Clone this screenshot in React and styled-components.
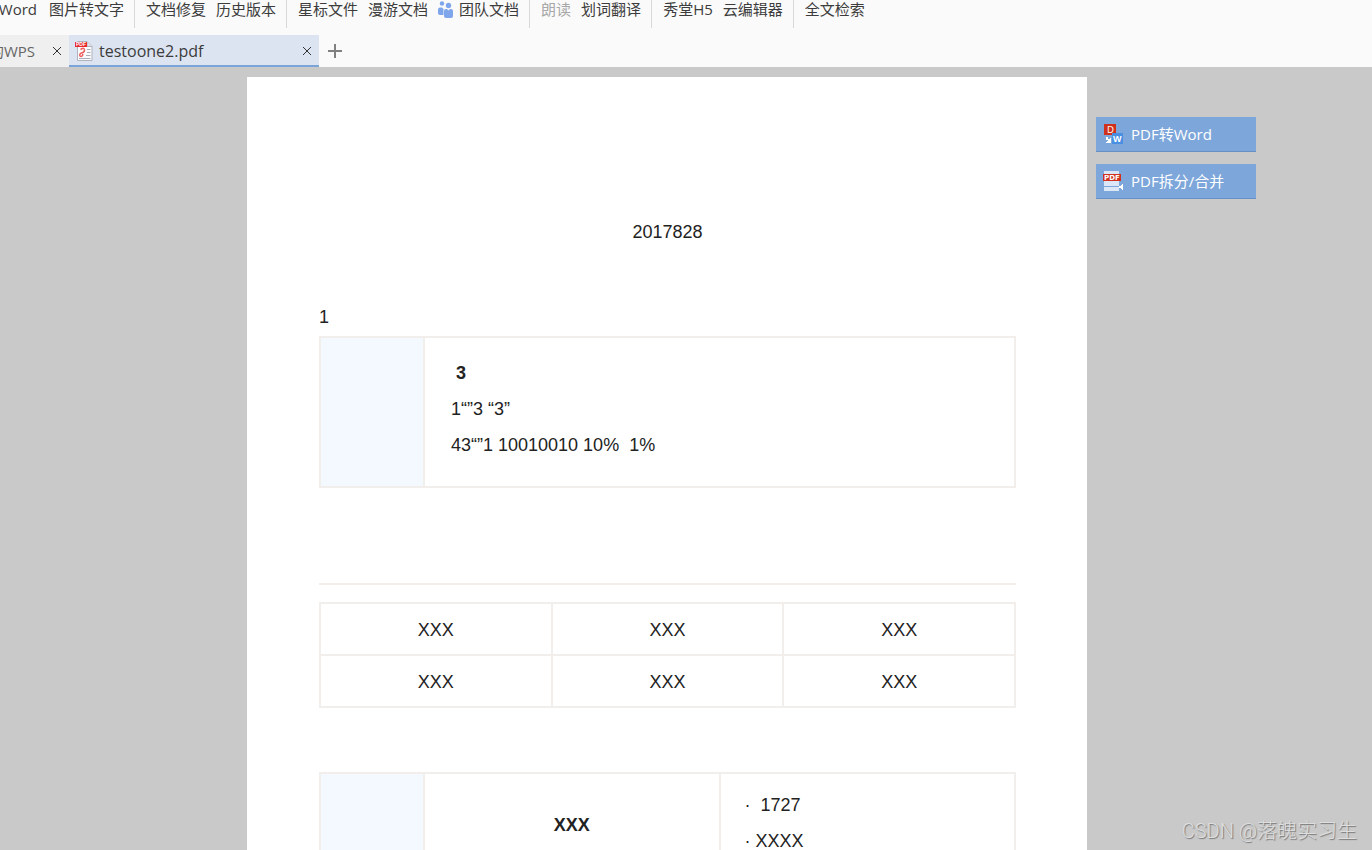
import * as React from "react"
import styled, { createGlobalStyle } from "styled-components"

const toolGroups = [
  [{ label: "Word", cut: true }, { label: "图片转文字" }],
  [{ label: "文档修复" }, { label: "历史版本" }],
  [{ label: "星标文件" }, { label: "漫游文档" }, { label: "团队文档", team: true }],
  [{ label: "朗读", disabled: true }, { label: "划词翻译" }],
  [{ label: "秀堂H5" }, { label: "云编辑器" }],
  [{ label: "全文检索" }],
]

const TeamIcon = () => (
  <svg width="15" height="17" viewBox="0 0 15 17" fill="#7fa5ea" aria-hidden="true">
    <circle cx="4" cy="2.500" r="2.2" />
    <circle cx="10.5" cy="4.500" r="2.700" />
    <path d="M0 8.5Q0 6.5 2 6.5H4L5.5 8V14H2Q0 14 0 12Z" />
    <path d="M6 10Q6 8 8 8H9L10.5 9.5L12 8H13Q15 8 15 10V15Q15 17 13 17H8Q6 17 6 15Z" />
  </svg>
)

const PdfFileIcon = () => (
  <svg width="18" height="20" viewBox="0 0 18 20" aria-hidden="true">
    <path d="M2.5 0.5H12L17 5.5V19.5H2.5Z" fill="#fbfbfc" stroke="#b0b3bd" />
    <path d="M12 0.5V5.5H17" fill="#dfe1e8" stroke="#b0b3bd" />
    <path d="M12 8.5H15.5M12 11.5H15.5M11 14.5H15.5M4 17.5H15.5" stroke="#a9aebd" />
    <path d="M5.500 8.500Q9.500 6 9.500 9Q9.500 11.500 6.500 12Q4 13 5 15Q7 16.500 8 13" fill="none" stroke="#ef5a5a" strokeWidth="1.500" />
    <rect x="0" y="1" width="12" height="5" fill="#e8262a" />
    <text x="1" y="5" fontSize="5" fontWeight="700" fontFamily="Liberation Sans, sans-serif" fill="#fff">PDF</text>
  </svg>
)

const CloseIcon = () => (
  <svg width="10" height="10" viewBox="0 0 10 10" stroke="#333" aria-hidden="true">
    <path d="M1 1L9 9M9 1L1 9" />
  </svg>
)

const PlusIcon = () => (
  <svg width="14" height="14" viewBox="0 0 14 14" stroke="#808080" strokeWidth="2" aria-hidden="true">
    <path d="M7 0V14M0 7H14" />
  </svg>
)

const ToWordIcon = () => (
  <svg width="20" height="20" viewBox="0 0 20 20" shapeRendering="crispEdges" aria-hidden="true">
    <rect x="1" y="0" width="12" height="11" fill="#d0311f" />
    <text x="4" y="9" fontSize="9" fontFamily="DejaVu Sans, sans-serif" fill="#fff3ea">D</text>
    <path d="M3 13H5V15H7V14H8V19H3V18H4V17H5V16H3Z" fill="#fff" />
    <rect x="9" y="9" width="11" height="11" fill="#4a90e2" />
    <text x="10" y="18" fontSize="9" fontFamily="Liberation Sans, sans-serif" fontWeight="700" fill="#fff">W</text>
  </svg>
)

const SplitIcon = () => (
  <svg width="20" height="20" viewBox="0 0 20 20" shapeRendering="crispEdges" aria-hidden="true">
    <path d="M1 0H16V15H1Z" fill="#dbe7f6" />
    <path d="M1 16H16V20H1Z" fill="#dbe7f6" />
    <rect x="0" y="3" width="18" height="7" fill="#d0311f" />
    <path d="M20 13V19H19V18H18V17H16V15H18V14H19V13Z" fill="#fff" />
    <text x="1" y="9" fontSize="7" fontFamily="DejaVu Sans, sans-serif" fontWeight="700" fill="#fff">PDF</text>
  </svg>
)

const App = () => {
  return (
    <Shell>
      <GlobalStyle />
      <Header>
        <Toolbar>
          {toolGroups.map((group) => (
            <ToolGroup key={group[0].label}>
              {group.map((tool) => (
                <Tool key={tool.label} type="button" disabled={tool.disabled} $cut={tool.cut}>
                  {tool.team && <TeamIcon />}
                  {tool.label}
                </Tool>
              ))}
            </ToolGroup>
          ))}
        </Toolbar>
        <TabBar>
          <HomeTab>
            <HomeName href="#home">的WPS</HomeName>
            <IconButton type="button" aria-label="Close"><CloseIcon /></IconButton>
          </HomeTab>
          <FileTab>
            <PdfFileIcon />
            <FileName href="#file">testoone2.pdf</FileName>
            <IconButton type="button" aria-label="Close"><CloseIcon /></IconButton>
          </FileTab>
          <NewTab type="button" aria-label="New tab"><PlusIcon /></NewTab>
        </TabBar>
      </Header>
      <Viewer>
        <Page>
          <Title>2017828</Title>
          <Heading>1</Heading>
          <Table>
            <colgroup>
              <SideCol />
              <col />
            </colgroup>
            <tbody>
              <tr>
                <SideCell />
                <NoteCell>
                  <Line><b>&nbsp;3</b></Line>
                  <Line>1“”3 “3”</Line>
                  <Line>43“”1 10010010 10%&nbsp; 1%</Line>
                </NoteCell>
              </tr>
            </tbody>
          </Table>
          <Rule />
          <Table>
            <tbody>
              {[0, 1].map((row) => (
                <tr key={row}>
                  {[0, 1, 2].map((col) => <Cell key={col}>XXX</Cell>)}
                </tr>
              ))}
            </tbody>
          </Table>
          <LastTable>
            <colgroup>
              <SideCol />
              <col />
              <col />
            </colgroup>
            <tbody>
              <tr>
                <SideCell />
                <Cell><b>XXX</b></Cell>
                <NoteCell>
                  <Line>·&nbsp; 1727</Line>
                  <Line>· XXXX</Line>
                </NoteCell>
              </tr>
            </tbody>
          </LastTable>
        </Page>
        <Actions>
          <Action type="button"><ToWordIcon />PDF转Word</Action>
          <Action type="button"><SplitIcon />PDF拆分/合并</Action>
        </Actions>
        <Watermark>CSDN @落魄实习生</Watermark>
      </Viewer>
    </Shell>
  )
}

export default App

const GlobalStyle = createGlobalStyle`
  * {
    box-sizing: border-box;
  }
  body {
    margin: 0;
    font: 15px/20px "Open Sans", "Noto Sans CJK SC", sans-serif;
    color: #3c3c3c;
  }
  button {
    padding: 0;
    border: 0;
    background: none;
    font: inherit;
    color: inherit;
  }
  a {
    color: inherit;
    text-decoration: none;
  }
  svg {
    flex: none;
  }
`;

const Shell = styled.div`
  display: flex;
  flex-direction: column;
  height: 100vh;
  overflow: hidden;
`;

const Header = styled.header`
  flex: none;
  background: #fafafa;
`;

const Toolbar = styled.nav`
  display: flex;
  height: 28px;
`;

const ToolGroup = styled.div`
  display: flex;
  align-items: flex-start;
  gap: 10px;
  padding: 0 10px 0 11px;
  border-right: 1px solid #d8d8d8;
  &:first-child {
    padding-left: 0;
  }
  &:last-child {
    border-right: 0;
  }
`;

const Tool = styled.button`
  display: flex;
  align-items: center;
  justify-content: flex-end;
  gap: 6px;
  width: ${props => props.$cut ? "39px" : "auto"};
  padding-right: ${props => props.$cut ? "2px" : "0"};
  overflow: hidden;
  line-height: 18px;
  white-space: nowrap;
  &:disabled {
    color: #a8a8a8;
  }
`;

const TabBar = styled.div`
  display: flex;
  align-items: flex-end;
  height: 39px;
`;

const HomeTab = styled.div`
  display: flex;
  align-items: center;
  gap: 17px;
  width: 69px;
  height: 32px;
  padding-right: 7px;
  background: #efefef;
`;

const HomeName = styled.a`
  display: flex;
  flex: 1;
  justify-content: flex-end;
  min-width: 0;
  overflow: hidden;
  white-space: nowrap;
  color: #666;
`;

const FileTab = styled.div`
  display: flex;
  align-items: center;
  gap: 6px;
  width: 250px;
  height: 32px;
  padding: 2px 7px 0 6px;
  background: #dce4f2;
  border-bottom: 2px solid #7ba4d9;
`;

const FileName = styled.a`
  flex: 1;
  font-size: 16px;
`;

const IconButton = styled.button`
  display: flex;
`;

const NewTab = styled.button`
  display: flex;
  align-items: center;
  height: 32px;
  padding: 0 9px;
`;

const Viewer = styled.main`
  position: relative;
  display: grid;
  grid-template-columns: 1fr minmax(0, 840px) 1fr;
  flex: 1;
  min-height: 0;
  padding: 10px 38px 0 0;
  overflow: hidden;
  background: #c9c9c9;
`;

const Page = styled.article`
  grid-column: 2;
  padding: 137px 71px 72px 72px;
  background: #fff;
  font: 18px/36px "Liberation Sans", Arial, sans-serif;
  color: #222;
`;

const Title = styled.h1`
  margin: 0 0 49px;
  font-size: 18px;
  font-weight: 400;
  text-align: center;
`;

const Heading = styled.h2`
  margin: 0 0 1px;
  font-size: 18px;
  font-weight: 400;
`;

const Table = styled.table`
  width: 100%;
  table-layout: fixed;
  border-collapse: collapse;
`;

const LastTable = styled(Table)`
  margin-top: 64px;
`;

const SideCol = styled.col`
  width: 104px;
`;

const Cell = styled.td`
  height: 52px;
  padding: 2px 0 0;
  border: 2px solid #f2eeeb;
  text-align: center;
`;

const SideCell = styled(Cell)`
  background: #f3f9fe;
`;

const NoteCell = styled(Cell)`
  padding: 17px 26px 23px;
  text-align: left;
  ${LastTable} & {
    padding: 13px 24px 15px;
  }
`;

const Line = styled.p`
  margin: 0;
`;

const Rule = styled.hr`
  height: 2px;
  margin: 95px 0 17px;
  border: 0;
  background: #f2eeeb;
`;

const Actions = styled.aside`
  display: flex;
  flex-direction: column;
  align-items: flex-start;
  gap: 12px;
  padding: 40px 0 0 9px;
`;

const Action = styled.button`
  display: flex;
  align-items: center;
  gap: 8px;
  width: 160px;
  height: 35px;
  padding-left: 7px;
  background: #7da6da;
  border-bottom: 1px solid #6690c6;
  color: #fff;
`;

const Watermark = styled.div`
  position: absolute;
  right: 15px;
  bottom: 7px;
  font: 300 20px/24px Roboto, "Noto Sans CJK SC", sans-serif;
  color: #dedede;
  text-shadow: 1px 1px 1px #777;
`;
